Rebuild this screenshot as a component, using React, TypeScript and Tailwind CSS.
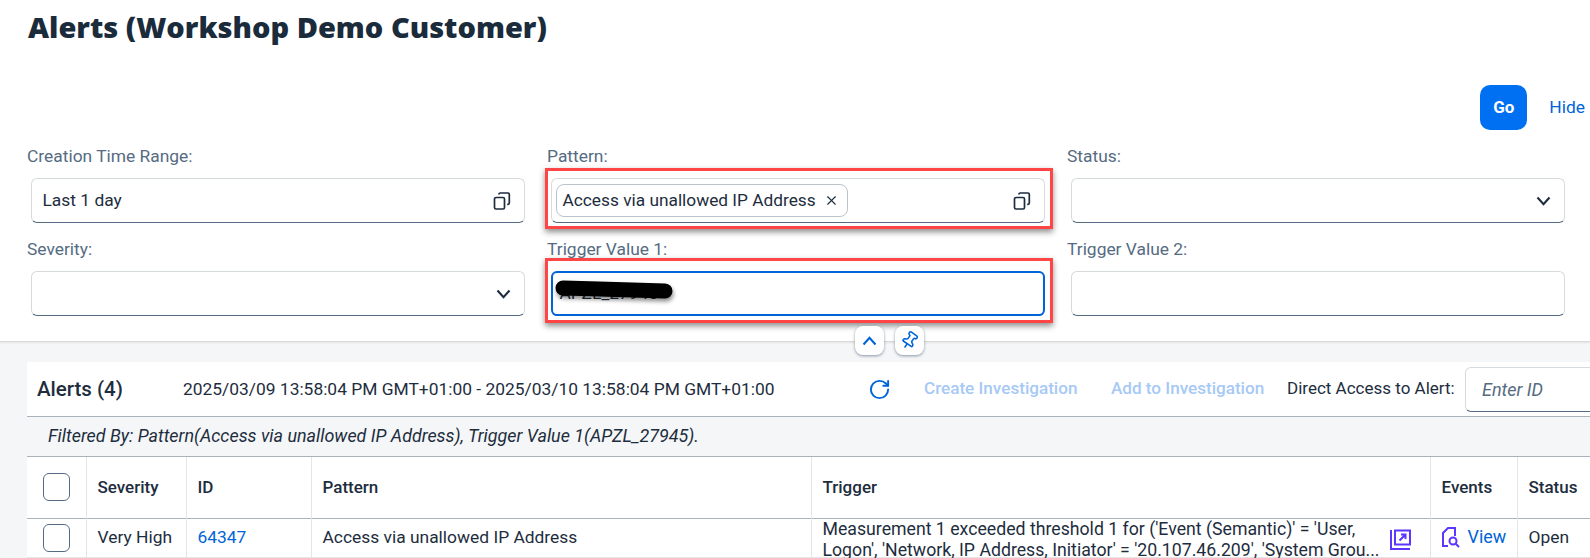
import { Pin, RotateCw, X } from "lucide-react";

const ValueHelpIcon = () => (
  <svg width="18" height="18" viewBox="0 0 18 18" fill="none" stroke="#1d2d3e" strokeWidth="1.7">
    <rect x="1.5" y="5.5" width="10" height="11.5" rx="1.5" />
    <path d="M6 2.5V2.2C6 1.5 6.5 1 7.2 1H15c.8 0 1.3.5 1.3 1.2V11c0 .8-.5 1.3-1.3 1.3h-.8" />
  </svg>
);

const Chevron = ({ up }: { up?: boolean }) => (
  <svg width="15" height="10" viewBox="0 0 15 10" fill="none" stroke="currentColor" strokeWidth="2.1" className={up ? "rotate-180" : ""}>
    <path d="M1.5 1.5 7.5 8.2 13.5 1.5" />
  </svg>
);

const Field = ({
  label,
  children,
  mark,
}: {
  label: string;
  children?: React.ReactNode;
  mark?: "short" | "tall";
}) => (
  <div className="relative">
    <div className="h-[22px] mb-[11px] text-[17.4px] leading-[22px] text-[#556b82] whitespace-nowrap">{label}</div>
    <div className="ml-[3.5px] w-[494px] h-[45px] flex items-center pl-[11px] pr-[13px] bg-white rounded-[6px] border border-[#d5dadd] border-b-[#556b82] text-[#1d2d3e] text-[17.4px]">
      {children}
    </div>
    {mark === "short" && (
      <div className="absolute left-[-2.5px] w-[508px] top-[23px] h-[61px] border-[3px] border-[#ff4545] shadow-[0_3px_6px_rgba(0,0,0,0.45)] pointer-events-none" />
    )}
    {mark === "tall" && (
      <div className="absolute left-[-2.5px] w-[508px] top-[20px] h-[65px] border-[3px] border-[#ff4545] shadow-[0_3px_6px_rgba(0,0,0,0.45)] pointer-events-none" />
    )}
  </div>
);

const App = () => {
  return (
    <div className="w-[1590px] h-[558px] overflow-hidden bg-[#f5f6f7] font-['Roboto',sans-serif] text-[#1d2d3e]">
      {/* --- Filter bar --- */}
      <div className="relative h-[342px] bg-white border-b border-[#d9d9d9] shadow-[0_1px_2px_rgba(0,0,0,0.08)] pl-[27px]">
        <h1 className="pt-[9px] ml-[1px] h-[44px] font-['Open_Sans',sans-serif] text-[29px] leading-[36px] font-extrabold text-[#1a2b3c] whitespace-nowrap">
          Alerts (Workshop Demo Customer)
        </h1>

        <div className="mt-[41px] h-[45px] flex justify-end items-center gap-[22px] pr-[5px]">
          <button className="w-[47px] h-[45px] rounded-[10px] bg-[#0070f2] text-white text-[17px] font-bold">
            Go
          </button>
          <span className="text-[17.4px] text-[#0064d9]">Hide</span>
        </div>

        <div className="mt-[15px] grid grid-cols-[520px_520px_520px] gap-y-[15px]">
          <Field label="Creation Time Range:">
            <span className="flex-1">Last 1 day</span>
            <ValueHelpIcon />
          </Field>
          <Field label="Pattern:" mark="short">
            <span className="ml-[-7px] h-[33px] pl-[6px] pr-[8px] flex items-center gap-[8px] rounded-[8px] border border-[#bcc3ca] text-[17.3px] whitespace-nowrap">
              Access via unallowed IP Address
              <X size={15} strokeWidth={1.8} />
            </span>
            <span className="flex-1" />
            <ValueHelpIcon />
          </Field>
          <Field label="Status:">
            <span className="flex-1" />
            <Chevron />
          </Field>
          <Field label="Severity:">
            <span className="flex-1" />
            <Chevron />
          </Field>
          <div className="relative">
            <Field label="Trigger Value 1:" mark="tall">
              <span className="ml-[-3px]">APZL_27945</span>
            </Field>
            {/* focus outline */}
            <div className="absolute left-[3.5px] top-[33px] w-[494px] h-[45px] rounded-[6px] border-2 border-[#0064d9] pointer-events-none" />
            {/* redaction scribble */}
            <svg className="absolute left-[2px] top-[40px] drop-shadow-[1px_3px_2px_rgba(0,0,0,0.45)]" width="130" height="26" viewBox="0 0 130 26" fill="none">
              <path d="M14 10 L50 11 L116 13" stroke="#000" strokeWidth="15" strokeLinecap="round" />
            </svg>
          </div>
          <Field label="Trigger Value 2:" />
        </div>

        {/* collapse / pin */}
        <div className="absolute left-[855px] top-[326px] flex gap-[11px]">
          <button className="w-[29px] h-[29px] flex items-center justify-center rounded-[8px] bg-white shadow-[0_1px_3px_rgba(85,107,130,0.7)] text-[#0064d9]">
            <Chevron up />
          </button>
          <button className="w-[29px] h-[29px] flex items-center justify-center rounded-[8px] bg-white shadow-[0_1px_3px_rgba(85,107,130,0.7)] text-[#0064d9]">
            <Pin size={19} strokeWidth={2} className="rotate-[35deg]" />
          </button>
        </div>
      </div>

      {/* --- Alerts table --- */}
      <div className="ml-[27px] mt-[20px] w-[1563px] bg-white overflow-hidden">
        <div className="h-[54px] flex items-center whitespace-nowrap">
          <span className="w-[156px] shrink-0 pl-[10px] text-[20.5px] font-medium">Alerts (4)</span>
          <span className="w-[685px] shrink-0 text-[17.4px]">2025/03/09 13:58:04 PM GMT+01:00 - 2025/03/10 13:58:04 PM GMT+01:00</span>
          <RotateCw size={23} strokeWidth={2} className="text-[#0064d9] shrink-0" />
          <span className="w-[187px] shrink-0 ml-[33px] text-[17.1px] font-medium text-[#a6c9f5]">Create Investigation</span>
          <span className="w-[176px] shrink-0 text-[17.1px] font-medium text-[#a6c9f5]">Add to Investigation</span>
          <span className="w-[178px] shrink-0 text-[17px]">Direct Access to Alert:</span>
          <div className="w-[160px] h-[45px] shrink-0 flex items-center pl-[16px] rounded-[6px] border border-[#d5dadd] border-b-[#556b82] text-[18px] italic text-[#556b82]">
            Enter ID
          </div>
        </div>

        <div className="h-[41px] pl-[21px] flex items-center bg-[#f5f6f7] border-y border-[#a8b3bd] text-[17.9px] italic">
          Filtered By: Pattern(Access via unallowed IP Address), Trigger Value 1(APZL_27945).
        </div>

        <table className="w-[1563px] table-fixed border-collapse text-[17.4px]">
          <colgroup>
            <col className="w-[59px]" />
            <col className="w-[100px]" />
            <col className="w-[125px]" />
            <col className="w-[500px]" />
            <col className="w-[619px]" />
            <col className="w-[87px]" />
            <col className="w-[73px]" />
          </colgroup>
          <thead>
            <tr className="h-[61px] border-b border-[#a8b3bd] text-left">
              <th className="border-r border-[#e5e5e5] pl-[16px]">
                <div className="w-[27px] h-[28px] rounded-[6px] border border-[#556b82] bg-white" />
              </th>
              <th className="border-r border-[#e5e5e5] pl-[11px] font-medium text-[17px]">Severity</th>
              <th className="border-r border-[#e5e5e5] pl-[11px] font-medium text-[17px]">ID</th>
              <th className="border-r border-[#e5e5e5] pl-[11px] font-medium text-[17px]">Pattern</th>
              <th className="border-r border-[#e5e5e5] pl-[11px] font-medium text-[17px]">Trigger</th>
              <th className="border-r border-[#e5e5e5] pl-[11px] font-medium text-[17px]">Events</th>
              <th className="pl-[11px] font-medium text-[17px]">Status</th>
            </tr>
          </thead>
          <tbody>
            <tr className="h-[39px] border-b border-[#e5e5e5]">
              <td className="border-r border-[#e5e5e5] pl-[16px]">
                <div className="w-[27px] h-[28px] rounded-[6px] border border-[#556b82] bg-white" />
              </td>
              <td className="border-r border-[#e5e5e5] pl-[11px] whitespace-nowrap">Very High</td>
              <td className="border-r border-[#e5e5e5] pl-[11px] text-[#0064d9]">64347</td>
              <td className="border-r border-[#e5e5e5] pl-[11px] whitespace-nowrap">Access via unallowed IP Address</td>
              <td className="border-r border-[#e5e5e5] pl-[11px] align-top">
                <div className="h-[38px] flex items-start">
                  <div className="w-[567px] text-[17.7px] leading-[21px] whitespace-nowrap">
                    <div>Measurement 1 exceeded threshold 1 for ('Event (Semantic)' = 'User,</div>
                    <div>Logon', 'Network, IP Address, Initiator' = '20.107.46.209', 'System Grou...</div>
                  </div>
                  <svg className="mt-[10px] -ml-[1px] shrink-0" width="22" height="22" viewBox="0 0 22 22" fill="none" stroke="#5d36ff" strokeWidth="2">
                    <path d="M2 1v19h19" />
                    <rect x="6" y="1.5" width="15" height="14" />
                    <path d="M10.5 11.5 16 6M12 5.5h4.5V10" />
                  </svg>
                </div>
              </td>
              <td className="border-r border-[#e5e5e5] pl-[10px]">
                <div className="flex items-center gap-[7px] text-[#0064d9] text-[17.9px]">
                  <svg width="20" height="22" viewBox="0 0 20 22" fill="none" stroke="#5d36ff" strokeWidth="2">
                    <path d="M7 20H2V7l5-5h7v8" />
                    <circle cx="12" cy="15" r="3.5" />
                    <path d="M14.5 17.5 18 21" />
                  </svg>
                  View
                </div>
              </td>
              <td className="pl-[11px]">Open</td>
            </tr>
          </tbody>
        </table>
      </div>
    </div>
  );
};

export default App;
